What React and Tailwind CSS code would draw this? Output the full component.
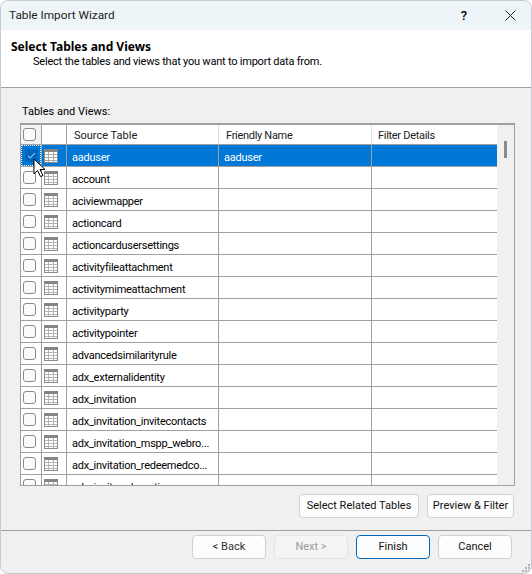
import React from 'react';

const rows = [
  'aaduser',
  'account',
  'aciviewmapper',
  'actioncard',
  'actioncardusersettings',
  'activityfileattachment',
  'activitymimeattachment',
  'activityparty',
  'activitypointer',
  'advancedsimilarityrule',
  'adx_externalidentity',
  'adx_invitation',
  'adx_invitation_invitecontacts',
  'adx_invitation_mspp_webro...',
  'adx_invitation_redeemedco...',
  'adx_inviteredemation',
];

function TableIcon({ selected }) {
  return (
    <svg width="14" height="14" viewBox="0 0 14 14" className="block">
      <rect x="0.5" y="0.5" width="13" height="13" fill="#fff" stroke="#8c8c8c" />
      <rect x="0" y="0" width="14" height="3" fill="#858585" />
      <path d="M4.5 3v10M9.5 3v10M1 5.5h12M1 8.5h12M1 11.5h12" stroke={selected ? '#a8a8a8' : '#b4b4b4'} strokeWidth="1" />
    </svg>
  );
}

function Check({ checked }) {
  if (checked) {
    return (
      <div className="w-[13px] h-[13px] rounded-[3px] bg-[#0067c0] flex items-center justify-center">
        <svg width="9" height="9" viewBox="0 0 9 9">
          <path d="M1 4.8l2.3 2.2L8 2" fill="none" stroke="#cfe3f5" strokeWidth="1" />
        </svg>
      </div>
    );
  }
  return <div className="w-[13px] h-[13px] rounded-[3px] border border-[#8a8a8a] bg-[#fbfbfb]" />;
}

function Btn({ children, className = '' }) {
  return (
    <button className={'h-[24px] rounded-[4px] border border-[#d0d0d0] bg-[#fdfdfd] text-[11px] text-[#111] ' + className}>
      {children}
    </button>
  );
}

function Row({ name, selected }) {
  return (
    <div className={'flex h-[22px] shrink-0 border-b border-[#a0a0a0] ' + (selected ? 'text-white' : 'text-black')}>
      <div className="w-[21px] shrink-0 border-r border-[#a0a0a0] flex items-center pl-[2px]">
        {selected ? (
          <div className="w-[20px] h-[21px] -ml-[2px] bg-[#0078d7] border border-dotted border-white flex items-center justify-center">
            <Check checked />
          </div>
        ) : (
          <Check />
        )}
      </div>
      <div className={'w-[25px] shrink-0 border-r border-[#a0a0a0] flex items-center pl-[2px] ' + (selected ? 'bg-[#0078d7]' : '')}>
        <TableIcon selected={selected} />
      </div>
      <div className={'w-[152px] shrink-0 border-r border-[#a0a0a0] pl-[5px] pt-[1px] leading-[23px] tracking-[-0.25px] whitespace-nowrap overflow-hidden ' + (selected ? 'bg-[#0078d7]' : '')}>
        {name}
      </div>
      <div className={'w-[153px] shrink-0 border-r border-[#a0a0a0] pl-[5px] pt-[1px] leading-[23px] tracking-[-0.25px] ' + (selected ? 'bg-[#0078d7]' : '')}>
        {selected ? name : ''}
      </div>
      <div className={'flex-1 ' + (selected ? 'bg-[#0078d7]' : '')} />
    </div>
  );
}

export default function App() {
  return (
    <div className="w-[532px] h-[574px] bg-white overflow-hidden text-[11px] text-black font-['Roboto','Noto_Sans',sans-serif]">
      <div className="relative w-full h-full flex flex-col rounded-[8px] border border-[#c9c9d2] overflow-hidden bg-[#f0f0f0]">
        <div className="h-[29px] shrink-0 bg-[#eef5f8] flex items-center pl-[8px] pr-[15px]">
          <span className="flex-1 text-[11.8px] text-[#222]">Table Import Wizard</span>
          <span className="text-[13px] font-medium mr-[38px]">?</span>
          <svg width="11" height="11" viewBox="0 0 11 11">
            <path d="M.5.5l10 10M10.5.5l-10 10" stroke="#222" strokeWidth="1" fill="none" />
          </svg>
        </div>
        <div className="h-[58px] shrink-0 bg-white border-b border-[#a0a0a0] pl-[10px] pt-[9px]">
          <div className="font-bold text-[12px] leading-[16px] text-black font-['Noto_Sans',sans-serif]">Select Tables and Views</div>
          <div className="pl-[22px] leading-[14px] tracking-[-0.22px]">Select the tables and views that you want to import data from.</div>
        </div>
        <div className="flex-1 flex flex-col px-[19px] pt-[16px] min-h-0">
          <div className="leading-[16px] pl-[2px]">Tables and Views:</div>
          <div className="mt-[3px] w-[495px] h-[363px] shrink-0 border border-[#a0a0a0] border-t-2 bg-[#f0f0f0] flex">
            <div className="w-[476px] shrink-0 bg-white flex flex-col overflow-hidden">
              <div className="flex h-[20px] shrink-0 border-b border-[#a0a0a0] text-[#222]">
                <div className="w-[21px] shrink-0 border-r border-[#a0a0a0] flex items-center pl-[2px] bg-[#f2f2f2]">
                  <Check />
                </div>
                <div className="w-[25px] shrink-0 border-r border-[#a0a0a0]" />
                <div className="w-[152px] shrink-0 border-r border-[#e0e0e0] pl-[7px] leading-[21px]">Source Table</div>
                <div className="w-[153px] shrink-0 border-r border-[#e0e0e0] pl-[7px] leading-[21px] tracking-[-0.3px]">Friendly Name</div>
                <div className="flex-1 pl-[6px] leading-[21px] tracking-[-0.3px]">Filter Details</div>
              </div>
              {rows.map((name, i) => (
                <Row key={name} name={name} selected={i === 0} />
              ))}
            </div>
            <div className="flex-1 flex justify-center pt-[16px]">
              <div className="w-[3px] h-[17px] bg-[#8a8a8a]" />
            </div>
          </div>
          <div className="flex justify-end gap-[8px] mt-[8px] -mr-[2px]">
            <Btn className="w-[120px]">Select Related Tables</Btn>
            <Btn className="w-[87px]">Preview &amp; Filter</Btn>
          </div>
        </div>
        <div className="h-[43px] shrink-0 border-t border-[#a0a0a0] flex justify-end gap-[8px] pt-[4px] pr-[19px]">
          <Btn className="w-[74px] !text-[#333]">&lt; Back</Btn>
          <Btn className="w-[74px] !text-[#9a9a9a] !border-[#e4e4e4] !bg-[#f4f4f4]">Next &gt;</Btn>
          <Btn className="w-[74px] !border-[#0067c0]">Finish</Btn>
          <Btn className="w-[74px]">Cancel</Btn>
        </div>
        <svg width="15" height="23" viewBox="0 0 15 23" className="absolute left-[32px] top-[157px]">
          <path d="M1 1v15l3.5-3.5 3 6 2.5-1-3-6h5z" fill="#fff" stroke="#000" strokeWidth="1" />
        </svg>
        <svg width="8" height="8" viewBox="0 0 8 8" className="absolute right-[1px] bottom-[1px]">
          <path d="M6 0h2v2H6zM3 3h2v2H3zM6 3h2v2H6zM0 6h2v2H0zM3 6h2v2H3zM6 6h2v2H6z" fill="#b0b0b0" />
        </svg>
      </div>
    </div>
  );
}
